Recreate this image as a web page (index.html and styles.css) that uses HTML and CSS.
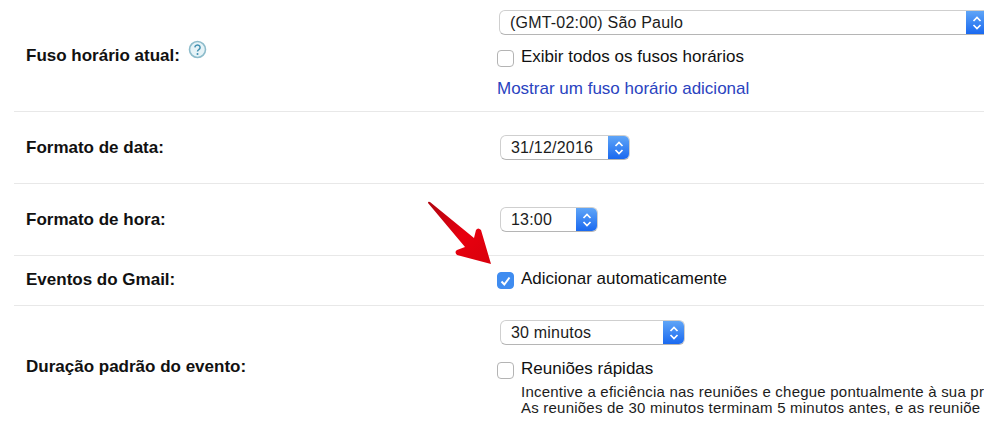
FILE: index.html
```html
<!DOCTYPE html>
<html lang="pt-BR">

<head>
  <meta charset="UTF-8">
  <meta name="viewport" content="width=device-width, initial-scale=1.0">
  <title>Configurações</title>
  <link rel="stylesheet" href="styles.css">
</head>

<body>
  <div class="settings">
    <div class="row rowZone">
      <div class="label">Fuso horário atual:
        <svg class="help" width="19" height="19" viewBox="0 0 19 19">
          <circle cx="9.500" cy="9.500" r="8" fill="#e6f3f7" stroke="#8dbccb" stroke-width="1.600" />
          <path d="M6.900 7.400a2.600 2.400 0 1 1 4 2.100c-.9.600-1.400 1-1.400 2" fill="none" stroke="#3f8fb0" stroke-width="1.500" />
          <circle cx="9.500" cy="14" r="1" fill="#3f8fb0" />
        </svg>
      </div>
      <div class="value">
        <div class="select selectZone">
          <span class="selectText">(GMT-02:00) São Paulo</span>
          <span class="selectArrow"><svg width="10" height="16" viewBox="0 0 10 16"><path d="M1.500 6 5 2.500 8.500 6M1.500 10 5 13.500 8.500 10" fill="none" stroke="#fff" stroke-width="1.700" /></svg></span>
        </div>
        <div class="check checkZone"><span class="box"></span>Exibir todos os fusos horários</div>
        <a class="link" href="#">Mostrar um fuso horário adicional</a>
      </div>
    </div>

    <div class="row rowSelect">
      <div class="label">Formato de data:</div>
      <div class="value">
        <div class="select selectDate">
          <span class="selectText">31/12/2016</span>
          <span class="selectArrow"><svg width="10" height="16" viewBox="0 0 10 16"><path d="M1.500 6 5 2.500 8.500 6M1.500 10 5 13.500 8.500 10" fill="none" stroke="#fff" stroke-width="1.700" /></svg></span>
        </div>
      </div>
    </div>

    <div class="row rowSelect">
      <div class="label">Formato de hora:</div>
      <div class="value">
        <div class="select selectHour">
          <span class="selectText">13:00</span>
          <span class="selectArrow"><svg width="10" height="16" viewBox="0 0 10 16"><path d="M1.500 6 5 2.500 8.500 6M1.500 10 5 13.500 8.500 10" fill="none" stroke="#fff" stroke-width="1.700" /></svg></span>
        </div>
      </div>
    </div>

    <div class="row rowGmail">
      <div class="label">Eventos do Gmail:</div>
      <div class="value">
        <div class="check">
          <span class="box boxOn"><svg width="13" height="12" viewBox="0 0 13 12"><path d="M2.500 6.500 5.300 9.500 10.500 2.500" fill="none" stroke="#fff" stroke-width="2" /></svg></span>Adicionar automaticamente
        </div>
      </div>
    </div>

    <div class="row rowLast">
      <div class="label">Duração padrão do evento:</div>
      <div class="value">
        <div class="select selectTime">
          <span class="selectText">30 minutos</span>
          <span class="selectArrow"><svg width="10" height="16" viewBox="0 0 10 16"><path d="M1.500 6 5 2.500 8.500 6M1.500 10 5 13.500 8.500 10" fill="none" stroke="#fff" stroke-width="1.700" /></svg></span>
        </div>
        <div class="check checkFast"><span class="box"></span>Reuniões rápidas</div>
        <div class="hint">Incentive a eficiência nas reuniões e chegue pontualmente à sua pr<br>As reuniões de 30 minutos terminam 5 minutos antes, e as reuniõe</div>
      </div>
    </div>
  </div>

  <!-- red arrow drawn over the page -->
  <svg class="arrow" width="70" height="70" viewBox="0 0 70 70">
    <defs>
      <linearGradient id="arrowRed" x1="0" y1="0" x2="1" y2="1">
        <stop offset="0" stop-color="#b00510" />
        <stop offset="0.55" stop-color="#e8000f" />
        <stop offset="1" stop-color="#d8000c" />
      </linearGradient>
    </defs>
    <path d="M1 3 Q1 1 3 2 L47 38 L49 30 Q51 27 54 30 L64 64 L30 55 Q27 52 30 50 L38 47 Z" fill="url(#arrowRed)" />
  </svg>
</body>

</html>
```

FILE: styles.css
```css
html,
body {
  height: 100%;
  overflow: hidden;
}

body {
  margin: 0;
  background-color: #fff;
  color: #111;
  font-family: "Liberation Sans", Arial, sans-serif;
  font-size: 17px;
  position: relative;
}

.settings {
  margin-left: 14px;
  width: 1100px;
}

.row {
  display: grid;
  grid-template-columns: 483px 1fr;
  align-items: center;
  border-bottom: 1px solid #e8e8e8;
  box-sizing: border-box;
}

.rowZone {
  height: 112px;
}

.rowSelect {
  height: 72px;
}

.rowGmail {
  height: 50px;
  padding-bottom: 2px;
}

.rowLast {
  border-bottom: 0;
  height: 122px;
}

.rowZone .value {
  align-self: start;
  padding-top: 10px;
}

.rowLast .value {
  align-self: start;
  padding-top: 14px;
}

.label {
  padding-left: 12px;
  font-size: 17px;
  font-weight: bold;
  color: #111;
}

.rowZone .label {
  position: relative;
  top: -3px;
}

.help {
  vertical-align: 2px;
  margin-left: 3px;
}

.value {
  min-width: 0;
}

.select {
  display: flex;
  box-sizing: border-box;
  height: 25px;
  margin-left: 3px;
  background-color: #fff;
  border: 1px solid #cfcfcf;
  border-bottom-color: #b5b5b5;
  border-radius: 6px;
  overflow: hidden;
  font-size: 16px;
  letter-spacing: 0.2px;
}

.selectText {
  flex: 1;
  padding-left: 10px;
  line-height: 23px;
  color: #1c1c1c;
}

.selectArrow {
  display: flex;
  align-items: center;
  justify-content: center;
  width: 21px;
  background: linear-gradient(#5fa5f7, #1a69f0);
}

.selectZone {
  margin-left: 2px;
  width: 500px;
}

.selectZone .selectArrow {
  width: 32px;
  justify-content: flex-start;
  padding-left: 6px;
  box-sizing: border-box;
}

.selectDate {
  width: 130px;
}

.selectHour {
  width: 98px;
}

.selectTime {
  width: 185px;
}

.check {
  display: flex;
  align-items: flex-start;
  line-height: 18px;
}

.checkZone {
  margin-top: 13px;
}

.checkFast {
  margin-top: 15px;
}

.box {
  display: flex;
  align-items: center;
  justify-content: center;
  box-sizing: border-box;
  width: 17px;
  height: 17px;
  margin-top: 2px;
  margin-right: 7px;
  background-color: #fff;
  border: 1px solid #b4b4b4;
  border-radius: 4px;
}

.boxOn {
  background-color: #3f8cf0;
  border-color: #3f8cf0;
}

.link {
  display: block;
  margin-top: 13px;
  line-height: 18px;
  color: #2a43c0;
  text-decoration: none;
}

.hint {
  margin-top: 5px;
  padding-left: 24px;
  font-size: 15px;
  line-height: 16px;
  letter-spacing: 0.22px;
  white-space: nowrap;
  color: #1c1c1c;
}

.arrow {
  position: absolute;
  left: 427px;
  top: 200px;
}
```
